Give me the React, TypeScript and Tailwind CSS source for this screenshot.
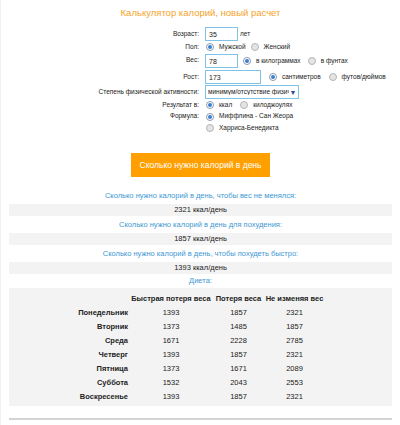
import React from "react";

const font = { fontFamily: '"Liberation Sans", Arial, sans-serif' };

function Radio({ checked }: { checked?: boolean }) {
  return (
    <span
      className={`inline-flex items-center justify-center w-[8px] h-[8px] rounded-full border shrink-0 ${
        checked ? "border-[#8a9bb0] bg-white" : "border-[#b5b5b5] bg-[#e4e4e4]"
      }`}
    >
      {checked && <span className="w-[4px] h-[4px] rounded-full bg-[#3b7fd0]" />}
    </span>
  );
}

function Opt({ checked, label }: { checked?: boolean; label: string }) {
  return (
    <span className="inline-flex items-center gap-[5px] shrink-0 whitespace-nowrap">
      <Radio checked={checked} />
      <span>{label}</span>
    </span>
  );
}

function Label({ children }: { children: React.ReactNode }) {
  return <div className="text-right self-center whitespace-nowrap">{children}</div>;
}

function Box({ value, w }: { value: string; w: string }) {
  return (
    <div
      className={`${w} h-[14px] shrink-0 border border-[#7ec4e6] bg-white pl-[3px] flex items-center text-[#222] text-[7px]`}
    >
      {value}
    </div>
  );
}

const diet = [
  ["Понедельник", "1393", "1857", "2321"],
  ["Вторник", "1373", "1485", "1857"],
  ["Среда", "1671", "2228", "2785"],
  ["Четверг", "1393", "1857", "2321"],
  ["Пятница", "1373", "1671", "2089"],
  ["Суббота", "1532", "2043", "2553"],
  ["Воскресенье", "1393", "1857", "2321"],
];

const results = [
  ["Сколько нужно калорий в день, чтобы вес не менялся:", "2321 ккал/день"],
  ["Сколько нужно калорий в день для похудения:", "1857 ккал/день"],
  ["Сколько нужно калорий в день, чтобы похудеть быстро:", "1393 ккал/день"],
];

export default function App() {
  return (
    <div
      style={font}
      className="w-[400px] h-[425px] overflow-hidden bg-white border-l border-[#f1f1f4] text-[#222] text-[7.5px] leading-none"
    >
      <div className="px-[8px]">
        <h1 className="h-[24px] flex items-center justify-center text-[9.5px] text-[#f6a328] pt-[1px]">
          Калькулятор калорий, новый расчет
        </h1>

        <div className="grid grid-cols-[190px_max-content] gap-x-[6px] mt-[2px] text-[6.5px]">
          <Label>Возраст:</Label>
          <div className="flex items-center gap-[2px] h-[16px]">
            <Box value="35" w="w-[33px]" />
            <span>лет</span>
          </div>

          <Label>Пол:</Label>
          <div className="flex items-center gap-[5px] h-[10px] pl-[1px]">
            <Opt checked label="Мужской" />
            <Opt label="Женский" />
          </div>

          <Label>Вес:</Label>
          <div className="flex items-center gap-[5px] h-[16px] mt-[1px]">
            <Box value="78" w="w-[33px]" />
            <span className="inline-flex items-center gap-[7px]">
              <Opt checked label="в килограммах" />
              <Opt label="в фунтах" />
            </span>
          </div>

          <Label>Рост:</Label>
          <div className="flex items-center gap-[8px] h-[16px]">
            <Box value="173" w="w-[56px]" />
            <span className="inline-flex items-center gap-[8px]">
              <Opt checked label="сантиметров" />
              <Opt label="футов/дюймов" />
            </span>
          </div>

          <Label>Степень физической активности:</Label>
          <div className="flex items-center h-[14px]">
            <div className="w-[94px] h-[14px] border border-[#7ec4e6] bg-white pl-[2px] pr-[1px] flex items-center whitespace-nowrap text-[6.5px]">
              <span className="flex-1 min-w-0 overflow-hidden">минимум/отсутствие физической</span>
              <span className="w-[8px] h-[8px] shrink-0 flex items-center justify-center text-[7px] text-[#2a4d8f]">
                ▼
              </span>
            </div>
          </div>

          <Label>Результат в:</Label>
          <div className="flex items-center gap-[8px] h-[12px] pl-[1px]">
            <Opt checked label="ккал" />
            <Opt label="килоджоулях" />
          </div>

          <Label>Формула:</Label>
          <div className="flex items-center h-[11px] pl-[1px]">
            <Opt checked label="Миффлина - Сан Жеора" />
          </div>

          <div />
          <div className="flex items-center h-[12px] pl-[1px]">
            <Opt label="Харриса-Бенедикта" />
          </div>
        </div>

        <div className="flex justify-center mt-[19px]">
          <button className="w-[139px] h-[24px] bg-[#ff9f00] text-white text-[8.5px] whitespace-nowrap">
            Сколько нужно калорий в день
          </button>
        </div>

        <div className="mt-[10px]">
          {results.map(([q, a]) => (
            <div key={q}>
              <div className="h-[17px] flex items-center justify-center text-[#3d98d3]">{q}</div>
              <div className="h-[12px] flex items-center justify-center bg-[#f3f3f3]">{a}</div>
            </div>
          ))}
          <div className="h-[14px] flex items-center justify-center text-[#3d98d3]">Диета:</div>
        </div>

        <div className="bg-[#f3f3f3] pt-[4px] pb-[2px]">
          <div className="grid grid-cols-[53px_84px_51px_61px] w-fit mx-auto">
            <div className="h-[14px]" />
            {["Быстрая потеря веса", "Потеря веса", "Не изменяя вес"].map((h) => (
              <div key={h} className="h-[14px] flex items-center justify-center font-bold whitespace-nowrap">
                {h}
              </div>
            ))}
            {diet.map((r) => (
              <React.Fragment key={r[0]}>
                <div className="h-[14px] flex items-center justify-end font-bold pr-[1px] whitespace-nowrap">{r[0]}</div>
                <div className="h-[14px] flex items-center justify-center">{r[1]}</div>
                <div className="h-[14px] flex items-center justify-center">{r[2]}</div>
                <div className="h-[14px] flex items-center justify-center">{r[3]}</div>
              </React.Fragment>
            ))}
          </div>
        </div>

        <div className="mt-[12px] h-[2px] bg-[#d4d4d4]" />
      </div>
    </div>
  );
}
